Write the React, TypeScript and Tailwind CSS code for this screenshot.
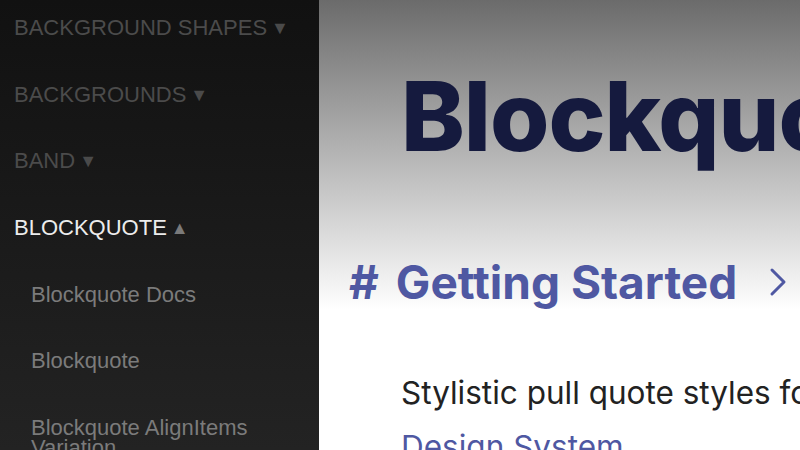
import React from "react";

interface NavItem {
    label: string;
    kind: "closed" | "open" | "child";
}

const items: NavItem[] = [
    { label: "BACKGROUND SHAPES", kind: "closed" },
    { label: "BACKGROUNDS", kind: "closed" },
    { label: "BAND", kind: "closed" },
    { label: "BLOCKQUOTE", kind: "open" },
    { label: "Blockquote Docs", kind: "child" },
    { label: "Blockquote", kind: "child" },
    { label: "Blockquote AlignItems Variation", kind: "child" },
];

const Sidebar: React.FC = () => {
    return (
        <aside className="w-[319px] shrink-0 h-full overflow-hidden bg-[linear-gradient(to_bottom,#111111,#232323)] font-['Liberation_Sans',Arial,sans-serif] text-[22px]">
            <ul className="flex flex-col gap-[46.67px] pt-[18px] pr-[8px]">
                {items.map((item, index) => (
                    <li key={index} className="leading-[20px]">
                        {item.kind === "child" ? (
                            <a href="/" className="block pl-[31px] text-[#7b7b7b]">{item.label}</a>
                        ) : (
                            <a href="/" className={"block whitespace-nowrap pl-[14px] " + (item.kind === "open" ? "text-[#ececec]" : "text-[#4b4b4b]")}>
                                {item.label}
                                <span className={"ml-[4px] text-[18px] align-[1px] " + (item.kind === "open" ? "text-[#7a7a7a]" : "text-[#4a4a4a]")}>
                                    {item.kind === "open" ? "▲" : "▼"}
                                </span>
                            </a>
                        )}
                    </li>
                ))}
            </ul>
        </aside>
    );
};

const App: React.FC = () => {
    return (
        <div className="flex w-[800px] h-[450px] overflow-hidden">
            <Sidebar />
            <main className="flex-1 overflow-hidden whitespace-nowrap bg-[linear-gradient(to_bottom,#6b6b6b_0px,#ffffff_310px)] font-['Inter',sans-serif] pl-[82px] pt-[68px]">
                <h1 className="text-[96px] leading-none font-extrabold text-[#151a3e] tracking-[-1px]">Blockquote</h1>
                <h2 className="mt-[95px] ml-[-52px] flex items-center text-[46px] leading-none font-bold text-[#4f58a2]">
                    <a href="/" className="mr-[17px]">#</a>
                    <span>Getting Started</span>
                    <svg className="ml-[32px] w-[18px] h-[30px]" viewBox="0 0 18 30" fill="none" stroke="currentColor" strokeWidth="3" strokeLinecap="round" strokeLinejoin="round">
                        <path d="M3 3l12 12-12 12" />
                    </svg>
                </h2>
                <p className="mt-[61px] text-[31.5px] leading-[54px] text-[#222222]">
                    Stylistic pull quote styles for
                    <br />
                    <a href="/" className="text-[#4f58a2]">Design System</a>
                </p>
            </main>
        </div>
    );
};

export default App;
